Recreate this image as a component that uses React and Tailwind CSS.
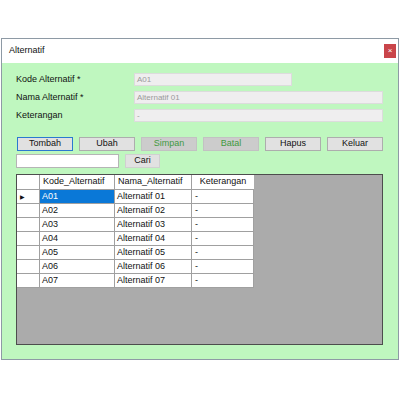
import React from "react";

const rows = [
  ["A01", "Alternatif 01", "-"],
  ["A02", "Alternatif 02", "-"],
  ["A03", "Alternatif 03", "-"],
  ["A04", "Alternatif 04", "-"],
  ["A05", "Alternatif 05", "-"],
  ["A06", "Alternatif 06", "-"],
  ["A07", "Alternatif 07", "-"],
];

function Field({ label, value, wide }) {
  return (
    <div className="flex items-center h-[13px]">
      <div className="w-[118px] text-[#111]">{label}</div>
      <div
        className={`h-[13px] ${wide ? "w-[249px]" : "w-[158px]"} bg-[#efeeef] border border-[#dcdcdc] text-[#9a9a9a] text-[8px] leading-[11px] px-[2px]`}
      >
        {value}
      </div>
    </div>
  );
}

function Btn({ children, off, active }) {
  let cls = "bg-[#e1e1e1] border-[#adadad] text-[#111]";
  if (off) cls = "bg-[#cccccc] border-[#c2c2c2] text-[#3f9a3f]";
  if (active) cls = "bg-[#e1e1e1] border-[#2b79d0] text-[#111]";
  return (
    <div className={`w-[56px] h-[14px] border flex items-center justify-center ${cls}`}>
      {children}
    </div>
  );
}

export default function App() {
  return (
    <div className="w-[400px] h-[400px] bg-white pt-[38px] text-[9px]" style={{ fontFamily: '"Liberation Sans", Arial, sans-serif' }}>
      <div className="ml-[1px] w-[398px] border border-[#8e9aa5] bg-white">
        {/* title bar */}
        <div className="h-[24px] flex items-center justify-between pl-[7px] pr-[2px]">
          <span className="text-[#111]">Alternatif</span>
          <div className="w-[12px] h-[14px] bg-[#c9454a] flex items-center justify-center text-white text-[8px] leading-none">
            ×
          </div>
        </div>

        {/* body */}
        <div className="bg-[#bff7bf] h-[296px] pl-[14px] pt-[9px] border-t border-[#bff7bf]">
          <div className="flex flex-col gap-[5px]">
            <Field label="Kode Alternatif *" value="A01" />
            <Field label="Nama Alternatif *" value="Alternatif 01" wide />
            <Field label="Keterangan" value="-" wide />
          </div>

          <div className="flex gap-[6px] mt-[15px] ml-[1px]">
            <Btn active>Tombah</Btn>
            <Btn>Ubah</Btn>
            <Btn off>Simpan</Btn>
            <Btn off>Batal</Btn>
            <Btn>Hapus</Btn>
            <Btn>Keluar</Btn>
          </div>

          <div className="flex gap-[6px] mt-[3px]">
            <div className="w-[103px] h-[14px] bg-white border border-[#b5b5b5]" />
            <div className="w-[35px] h-[14px] bg-[#e1e1e1] border border-[#d0d0d0] flex items-center justify-center text-[#111]">
              Cari
            </div>
          </div>

          {/* grid */}
          <div className="mt-[6px] w-[367px] h-[171px] bg-[#ababab] border border-[#4d4d4d]">
            <div className="w-[237px] bg-white text-[#111]">
              <div className="flex h-[15px] border-b border-[#a0a0a0]">
                <div className="w-[23px] border-r border-[#a0a0a0]" />
                <div className="w-[75px] border-r border-[#a0a0a0] flex items-center px-[3px]">Kode_Alternatif</div>
                <div className="w-[77px] border-r border-[#a0a0a0] flex items-center px-[3px]">Nama_Alternatif</div>
                <div className="w-[62px] flex items-center justify-center">Keterangan</div>
              </div>
              {rows.map((r, i) => (
                <div key={r[0]} className="flex h-[14px] border-b border-[#a0a0a0]">
                  <div className="w-[23px] border-r border-[#a0a0a0] flex items-center pl-[3px]">
                    {i === 0 && <span className="text-[6px] leading-none">▶</span>}
                  </div>
                  <div
                    className={`w-[75px] border-r border-[#a0a0a0] flex items-center px-[2px] ${i === 0 ? "bg-[#0a78d7] text-white" : ""}`}
                  >
                    {r[0]}
                  </div>
                  <div className="w-[77px] border-r border-[#a0a0a0] flex items-center px-[2px]">{r[1]}</div>
                  <div className="w-[62px] border-r border-[#a0a0a0] flex items-center px-[3px]">{r[2]}</div>
                </div>
              ))}
            </div>
          </div>
        </div>
      </div>
    </div>
  );
}
